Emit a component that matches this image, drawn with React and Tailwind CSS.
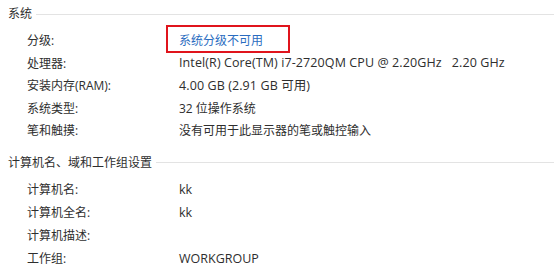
export default function App() {
  const sys = [
    ["分级:", "系统分级不可用", "box"],
    ["处理器:", "Intel(R) Core(TM) i7-2720QM CPU @ 2.20GHz\u00a0\u00a0\u00a02.20 GHz", "latin"],
    ["安装内存(RAM):", "4.00 GB (2.91 GB 可用)", "latin"],
    ["系统类型:", "32 位操作系统"],
    ["笔和触摸:", "没有可用于此显示器的笔或触控输入"],
  ]
  const comp = [
    ["计算机名:", "kk"],
    ["计算机全名:", "kk"],
    ["计算机描述:", ""],
    ["工作组:", "WORKGROUP"],
  ]

  return (
    <div
      className="w-[554px] h-[273px] bg-white text-[#2e2e2e] text-[12px] overflow-hidden"
      style={{ fontFamily: '"Open Sans", "Noto Sans CJK SC", sans-serif' }}
    >
      {/* 系统 */}
      <div className="flex items-center h-[16px] mt-[6px] pl-[8px]">
        <span className="leading-[16px]">系统</span>
        <div className="flex-1 h-px bg-[#e3e3e3] ml-[4px]" />
      </div>
      <div className="mt-[8px]">
        {sys.map(([k, v, kind]) => (
          <div key={k} className="flex items-center h-[22.5px]">
            <div className="w-[179px] pl-[27px] shrink-0">{k}</div>
            {kind === "box" ? (
              <div className="relative leading-[18px] text-[#2a6cc0]">
                {v}
                <div className="absolute left-[-13px] top-[-7px] w-[124px] h-[28px] border-2 border-[#e0141c]" />
              </div>
            ) : kind === "latin" ? (
              <div className="whitespace-nowrap text-[12.5px] tracking-[0.1px]">{v}</div>
            ) : (
              <div className="whitespace-nowrap">{v}</div>
            )}
          </div>
        ))}
      </div>

      {/* 计算机名、域和工作组设置 */}
      <div className="flex items-center h-[16px] mt-[12px] pl-[8px]">
        <span className="leading-[16px]">计算机名、域和工作组设置</span>
        <div className="flex-1 h-px bg-[#e3e3e3] ml-[4px]" />
      </div>
      <div className="mt-[8px]">
        {comp.map(([k, v]) => (
          <div key={k} className="flex items-center h-[23px]">
            <div className="w-[179px] pl-[27px] shrink-0">{k}</div>
            <div className="text-[12.5px]">{v}</div>
          </div>
        ))}
      </div>
    </div>
  )
}
